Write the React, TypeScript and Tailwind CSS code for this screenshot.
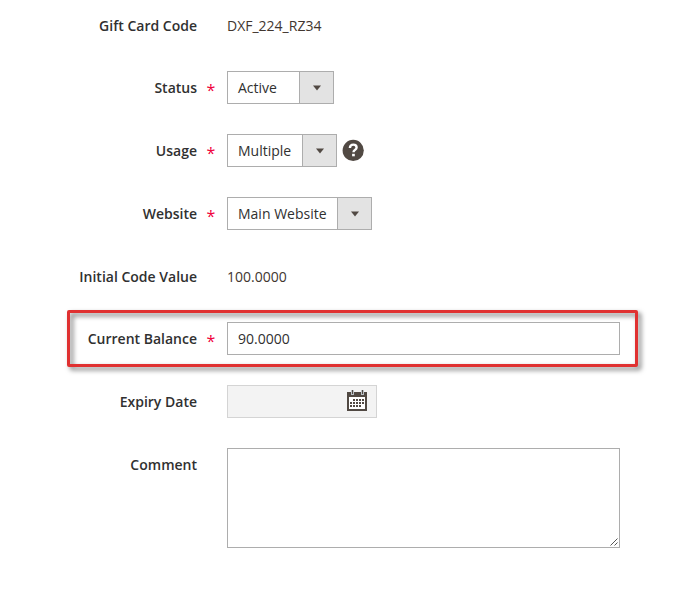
import React from "react";

function Row({ label, required, className, children }: { label: string; required?: boolean; className: string; children?: React.ReactNode }) {
  return (
    <div className={`flex ${className}`}>
      <div className="flex h-[33px] w-[227px] shrink-0 items-center">
        <span className="w-[197px] text-right font-semibold">{label}</span>
        {required && (
          <span className="ml-[9.5px] mt-[5px] text-[16px] font-medium leading-none text-[#f0003c]">*</span>
        )}
      </div>
      {children}
    </div>
  );
}

function Select({ value, width }: { value: string; width: string }) {
  return (
    <div className={`flex h-[33px] border border-[#adadad] bg-white ${width}`}>
      <span className="flex grow items-center whitespace-nowrap pl-[10px]">{value}</span>
      <span className="flex w-[34px] shrink-0 items-center justify-center border-l border-[#adadad] bg-[#e3e3e3]">
        <svg width="8" height="6" viewBox="0 0 8 6" className="mt-px">
          <path d="M0 0.5h8L4 5.5z" fill="#514943" />
        </svg>
      </span>
    </div>
  );
}

function HelpIcon() {
  return (
    <svg width="22" height="22" viewBox="0 0 22 22" className="ml-[5px] mt-[5px]">
      <circle cx="11.2" cy="11.4" r="10.6" fill="#514943" />
      <path d="M7.9 9c.1-2.2 1.4-3.4 3.4-3.4s3.3 1.1 3.3 2.8c0 2.4-3.1 2.5-3.1 4.8" fill="none" stroke="#fff" strokeWidth="2.4" />
      <rect x="10.1" y="14.8" width="2.7" height="2.5" fill="#fff" />
    </svg>
  );
}

function CalendarIcon() {
  return (
    <svg width="21" height="22" viewBox="0 0 21 22" shapeRendering="crispEdges">
      <path d="M0 3h20v19H0z" fill="#514943" />
      <path d="M2 8h16v12H2z" fill="#fff" />
      <path d="M4 1h3v5H4zM14 1h3v5h-3z" fill="#b9bfc4" />
      <path d="M5 1h1v4H5zM15 1h1v4h-1z" fill="#514943" />
      <path
        d="M6 10h2v2H6zM9 10h2v2H9zM12 10h2v2h-2zM15 10h2v2h-2zM3 13h2v2H3zM6 13h2v2H6zM9 13h2v2H9zM12 13h2v2h-2zM15 13h2v2h-2zM3 16h2v2H3zM6 16h2v2H6zM9 16h2v2H9zM12 16h2v2h-2z"
        fill="#514943"
      />
    </svg>
  );
}

export default function App() {
  return (
    <div className="h-[603px] w-[691px] overflow-hidden bg-white pt-[9px] font-['Open_Sans',sans-serif] text-[14px] leading-[19px] text-[#303030]">
      <Row label="Gift Card Code" className="h-[62px]">
        <span className="flex h-[33px] items-center text-[#41362f]">DXF_224_RZ34</span>
      </Row>
      <Row label="Status" required className="h-[63px]">
        <Select value="Active" width="w-[107px]" />
      </Row>
      <Row label="Usage" required className="h-[63px]">
        <Select value="Multiple" width="w-[110px]" />
        <HelpIcon />
      </Row>
      <Row label="Website" required className="h-[63px]">
        <Select value="Main Website" width="w-[145px]" />
      </Row>
      <Row label="Initial Code Value" className="h-[62px]">
        <span className="flex h-[33px] items-center text-[#41362f]">100.0000</span>
      </Row>
      <Row label="Current Balance" required className="relative h-[63px]">
        <span className="flex h-[33px] w-[393px] items-center border border-[#adadad] pl-[10px]">90.0000</span>
        <div className="pointer-events-none absolute left-[67px] top-[-12px] h-[57px] w-[571px] rounded-[2px] border-[3px] border-[#e03131] drop-shadow-[3px_3px_2.5px_rgba(0,0,0,0.55)]" />
      </Row>
      <Row label="Expiry Date" className="h-[63px]">
        <div className="flex h-[33px] w-[150px] justify-end border border-[#d4d4d4] bg-[#f3f3f3] pr-[8px] pt-[3px]">
          <CalendarIcon />
        </div>
      </Row>
      <Row label="Comment" className="h-[100px]">
        <div className="flex h-[100px] w-[393px] items-end justify-end border border-[#adadad] p-px">
          <svg width="8" height="8" viewBox="0 0 8 8">
            <path d="M0.5 7.5l7-7M4.5 7.5l3-3" stroke="#555" strokeWidth="1" />
          </svg>
        </div>
      </Row>
    </div>
  );
}
